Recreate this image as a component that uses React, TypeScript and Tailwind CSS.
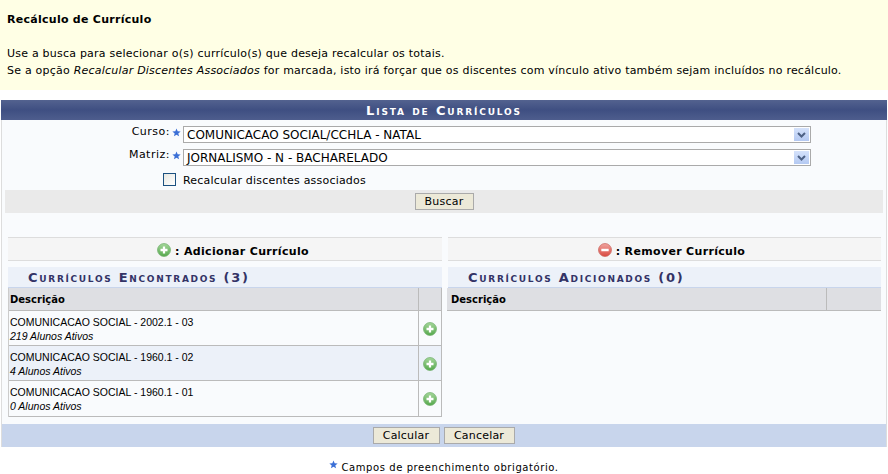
import React from 'react';

const verdana = 'font-["DejaVu_Sans",Verdana,sans-serif]';

function Star({ className = '' }: { className?: string }) {
  return (
    <svg viewBox="0 0 10 10" className={`w-[9px] h-[9px] shrink-0 ${className}`}>
      <path d="M5 .5 6.300 3.600 9.600 3.800 7 6 7.900 9.300 5 7.500 2.100 9.300 3 6 .4 3.800 3.700 3.600Z" fill="#3b6fd6" />
    </svg>
  );
}

function RoundIcon({ kind, size = 14 }: { kind: 'add' | 'remove'; size?: number }) {
  const add = kind === 'add';
  const id = add ? 'gradAdd' : 'gradRemove';
  return (
    <svg viewBox="0 0 16 16" width={size} height={size} className="shrink-0">
      <defs>
        <linearGradient id={id} x1="0" y1="0" x2="0" y2="1">
          <stop offset="0" stopColor={add ? '#a5d79b' : '#f0a5a0'} />
          <stop offset="1" stopColor={add ? '#55a84c' : '#d9483f'} />
        </linearGradient>
      </defs>
      <circle cx="8" cy="8" r="7.400" fill={`url(#${id})`} stroke={add ? '#6fae68' : '#c9615a'} strokeWidth="0.800" />
      {add ? (
        <path d="M6.700 4h2.600v2.700H12v2.600H9.300V12H6.700V9.300H4V6.700h2.700Z" fill="#fff" />
      ) : (
        <rect x="3.800" y="6.600" width="8.400" height="2.800" fill="#fff" />
      )}
    </svg>
  );
}

function SelectBox({ value }: { value: string }) {
  return (
    <div className="w-[628px] h-[17px] border border-[#aaa] bg-white flex items-center justify-between pl-[3px] pr-px">
      <span className="text-[12px] leading-none text-black">{value}</span>
      <span className="w-[15px] h-[13px] bg-gradient-to-b from-[#d5e2fb] to-[#b4c9f2] flex items-center justify-center">
        <svg viewBox="0 0 9 6" className="w-[9px] h-[6px]">
          <path d="M1 1 4.500 4.500 8 1" fill="none" stroke="#4d6185" strokeWidth="2" />
        </svg>
      </span>
    </div>
  );
}

function FormRow({ label, value }: { label: string; value: string }) {
  return (
    <div className="flex items-start h-[17px]">
      <div className="w-[182px] flex justify-end items-center gap-[2px] pr-[2px] -mt-[1px]">
        <span className="text-[11px] leading-[14px] tracking-[0.5px]">{label}</span>
        <Star />
      </div>
      <SelectBox value={value} />
    </div>
  );
}

function Btn({ label, w }: { label: string; w: string }) {
  return (
    <button className={`${w} h-[17px] bg-[#ece9d8] border border-[#aaa] text-[11px] leading-none tracking-[0.2px] text-black ${verdana}`}>
      {label}
    </button>
  );
}

function Caption({ children, className = '' }: { children: React.ReactNode; className?: string }) {
  return (
    <div className={`h-[21px] bg-[#ecf1f9] border-b border-[#c8d5ec] text-[#333366] font-bold text-[13px] leading-[21px] tracking-[1.7px] [font-variant:small-caps] ${className}`}>
      {children}
    </div>
  );
}

function ActionBar({ kind, label, offset }: { kind: 'add' | 'remove'; label: string; offset: string }) {
  return (
    <div className={`h-[24px] ${offset} bg-[#f5f5f5] border-y border-[#dddddd] flex items-center justify-center gap-[4px] text-[11px] font-bold tracking-[0.33px] text-black`}>
      <span className="mt-[2px] flex">
        <RoundIcon kind={kind} size={14} />
      </span>
      <span className="mt-[7px]">: {label}</span>
    </div>
  );
}

const curriculos = [
  { nome: 'COMUNICACAO SOCIAL - 2002.1 - 03', alunos: '219 Alunos Ativos', bg: 'bg-[#f9fbfd]', h: 'h-[35px]' },
  { nome: 'COMUNICACAO SOCIAL - 1960.1 - 02', alunos: '4 Alunos Ativos', bg: 'bg-[#ecf1f9]', h: 'h-[35px]' },
  { nome: 'COMUNICACAO SOCIAL - 1960.1 - 01', alunos: '0 Alunos Ativos', bg: 'bg-[#f9fbfd]', h: 'h-[36px]' },
];

export default function App() {
  return (
    <div className={`w-[888px] h-[474px] bg-white text-black overflow-hidden ${verdana}`}>
      {/* Instrucoes */}
      <div className="h-[90px] bg-[#ffffe5] pl-[7px] pt-[13px] text-[11px] leading-[17px] tracking-[0.22px]">
        <p className="font-bold leading-[14px] tracking-[0.27px]">Recálculo de Currículo</p>
        <p className="mt-[18px]">Use a busca para selecionar o(s) currículo(s) que deseja recalcular os totais.</p>
        <p>
          Se a opção <i>Recalcular Discentes Associados</i> for marcada, isto irá forçar que os discentes com vínculo ativo também sejam incluídos no recálculo.
        </p>
      </div>

      {/* Formulario */}
      <div className="mt-[10px] ml-[1px] w-[886px] h-[347px] bg-[#f9fbfd] border-x border-[#dddddd] flex flex-col">
        <div className="h-[20px] -mx-px bg-gradient-to-b from-[#53628f] via-[#3f4f82] to-[#4e5d8d] text-white text-center font-bold text-[13px] leading-[21px] tracking-[1.85px] [font-variant:small-caps]">
          Lista de Currículos
        </div>

        <div className="pt-[6px] flex flex-col gap-[6px] -ml-[1px]">
          <FormRow label="Curso:" value="COMUNICACAO SOCIAL/CCHLA - NATAL" />
          <FormRow label="Matriz:" value="JORNALISMO - N - BACHARELADO" />
        </div>

        <div className="mt-[6px] h-[15px] flex items-center pl-[161px]">
          <span className="w-[13px] h-[13px] border border-[#1c5180] bg-gradient-to-br from-[#e8e8e2] to-white" />
          <span className="ml-[7px] mt-px text-[11px] leading-none tracking-[0.2px]">Recalcular discentes associados</span>
        </div>

        <div className="mt-[3px] mx-[3px] h-[23px] bg-[#eaeaea] flex items-center justify-center">
          <Btn label="Buscar" w="w-[59px]" />
        </div>

        <div className="mt-[24px] flex pl-[6px] pr-[5px] gap-[6px] flex-1">
          {/* Encontrados */}
          <div className="w-[434px]">
            <ActionBar kind="add" label="Adicionar Currículo" offset="pl-[16px]" />
            <Caption className="mt-[6px] pl-[20px]">Currículos Encontrados (3)</Caption>
            <div className="border-r border-[#bbbbbb] border-l border-l-[#cccccc]">
              <div className="h-[23px] bg-[#dedfe3] border-b border-[#bbbbbb] flex">
                <div className="flex-1 pl-[1px] text-[10px] font-bold leading-[23px]">Descrição</div>
                <div className="w-[23px] border-l border-[#bbbbbb]" />
              </div>
              {curriculos.map((c) => (
                <div key={c.nome} className={`${c.h} ${c.bg} border-b border-[#bbbbbb] flex`}>
                  <div className="flex-1 pl-[1px] pt-[4px] font-['Liberation_Sans',Arial,sans-serif] text-[10.5px] leading-[14px]">
                    <div>{c.nome}</div>
                    <div className="italic">{c.alunos}</div>
                  </div>
                  <div className="w-[23px] pt-px border-l border-[#bbbbbb] flex items-center justify-center">
                    <RoundIcon kind="add" size={14} />
                  </div>
                </div>
              ))}
            </div>
          </div>

          {/* Adicionados */}
          <div className="flex-1">
            <ActionBar kind="remove" label="Remover Currículo" offset="pl-[14px]" />
            <Caption className="mt-[6px] pl-[20px]">Currículos Adicionados (0)</Caption>
            <div className="h-[23px] -ml-px bg-[#dedfe3] border-b border-[#bbbbbb] flex">
              <div className="flex-1 pl-[4px] text-[10px] font-bold leading-[23px]">Descrição</div>
              <div className="w-[55px] border-l border-[#bbbbbb]" />
            </div>
          </div>
        </div>

        <div className="h-[23px] -mx-px border-x border-[#dddddd] bg-[#c8d5ec] flex items-center justify-center gap-[4px] pr-[1px]">
          <Btn label="Calcular" w="w-[67px]" />
          <Btn label="Cancelar" w="w-[71px]" />
        </div>
      </div>

      <div className="mt-[13px] flex items-start justify-center gap-[3px] text-[10px] leading-[14px] tracking-[0.58px]">
        <Star />
        <span className="mt-[1px]">Campos de preenchimento obrigatório.</span>
      </div>
    </div>
  );
}
